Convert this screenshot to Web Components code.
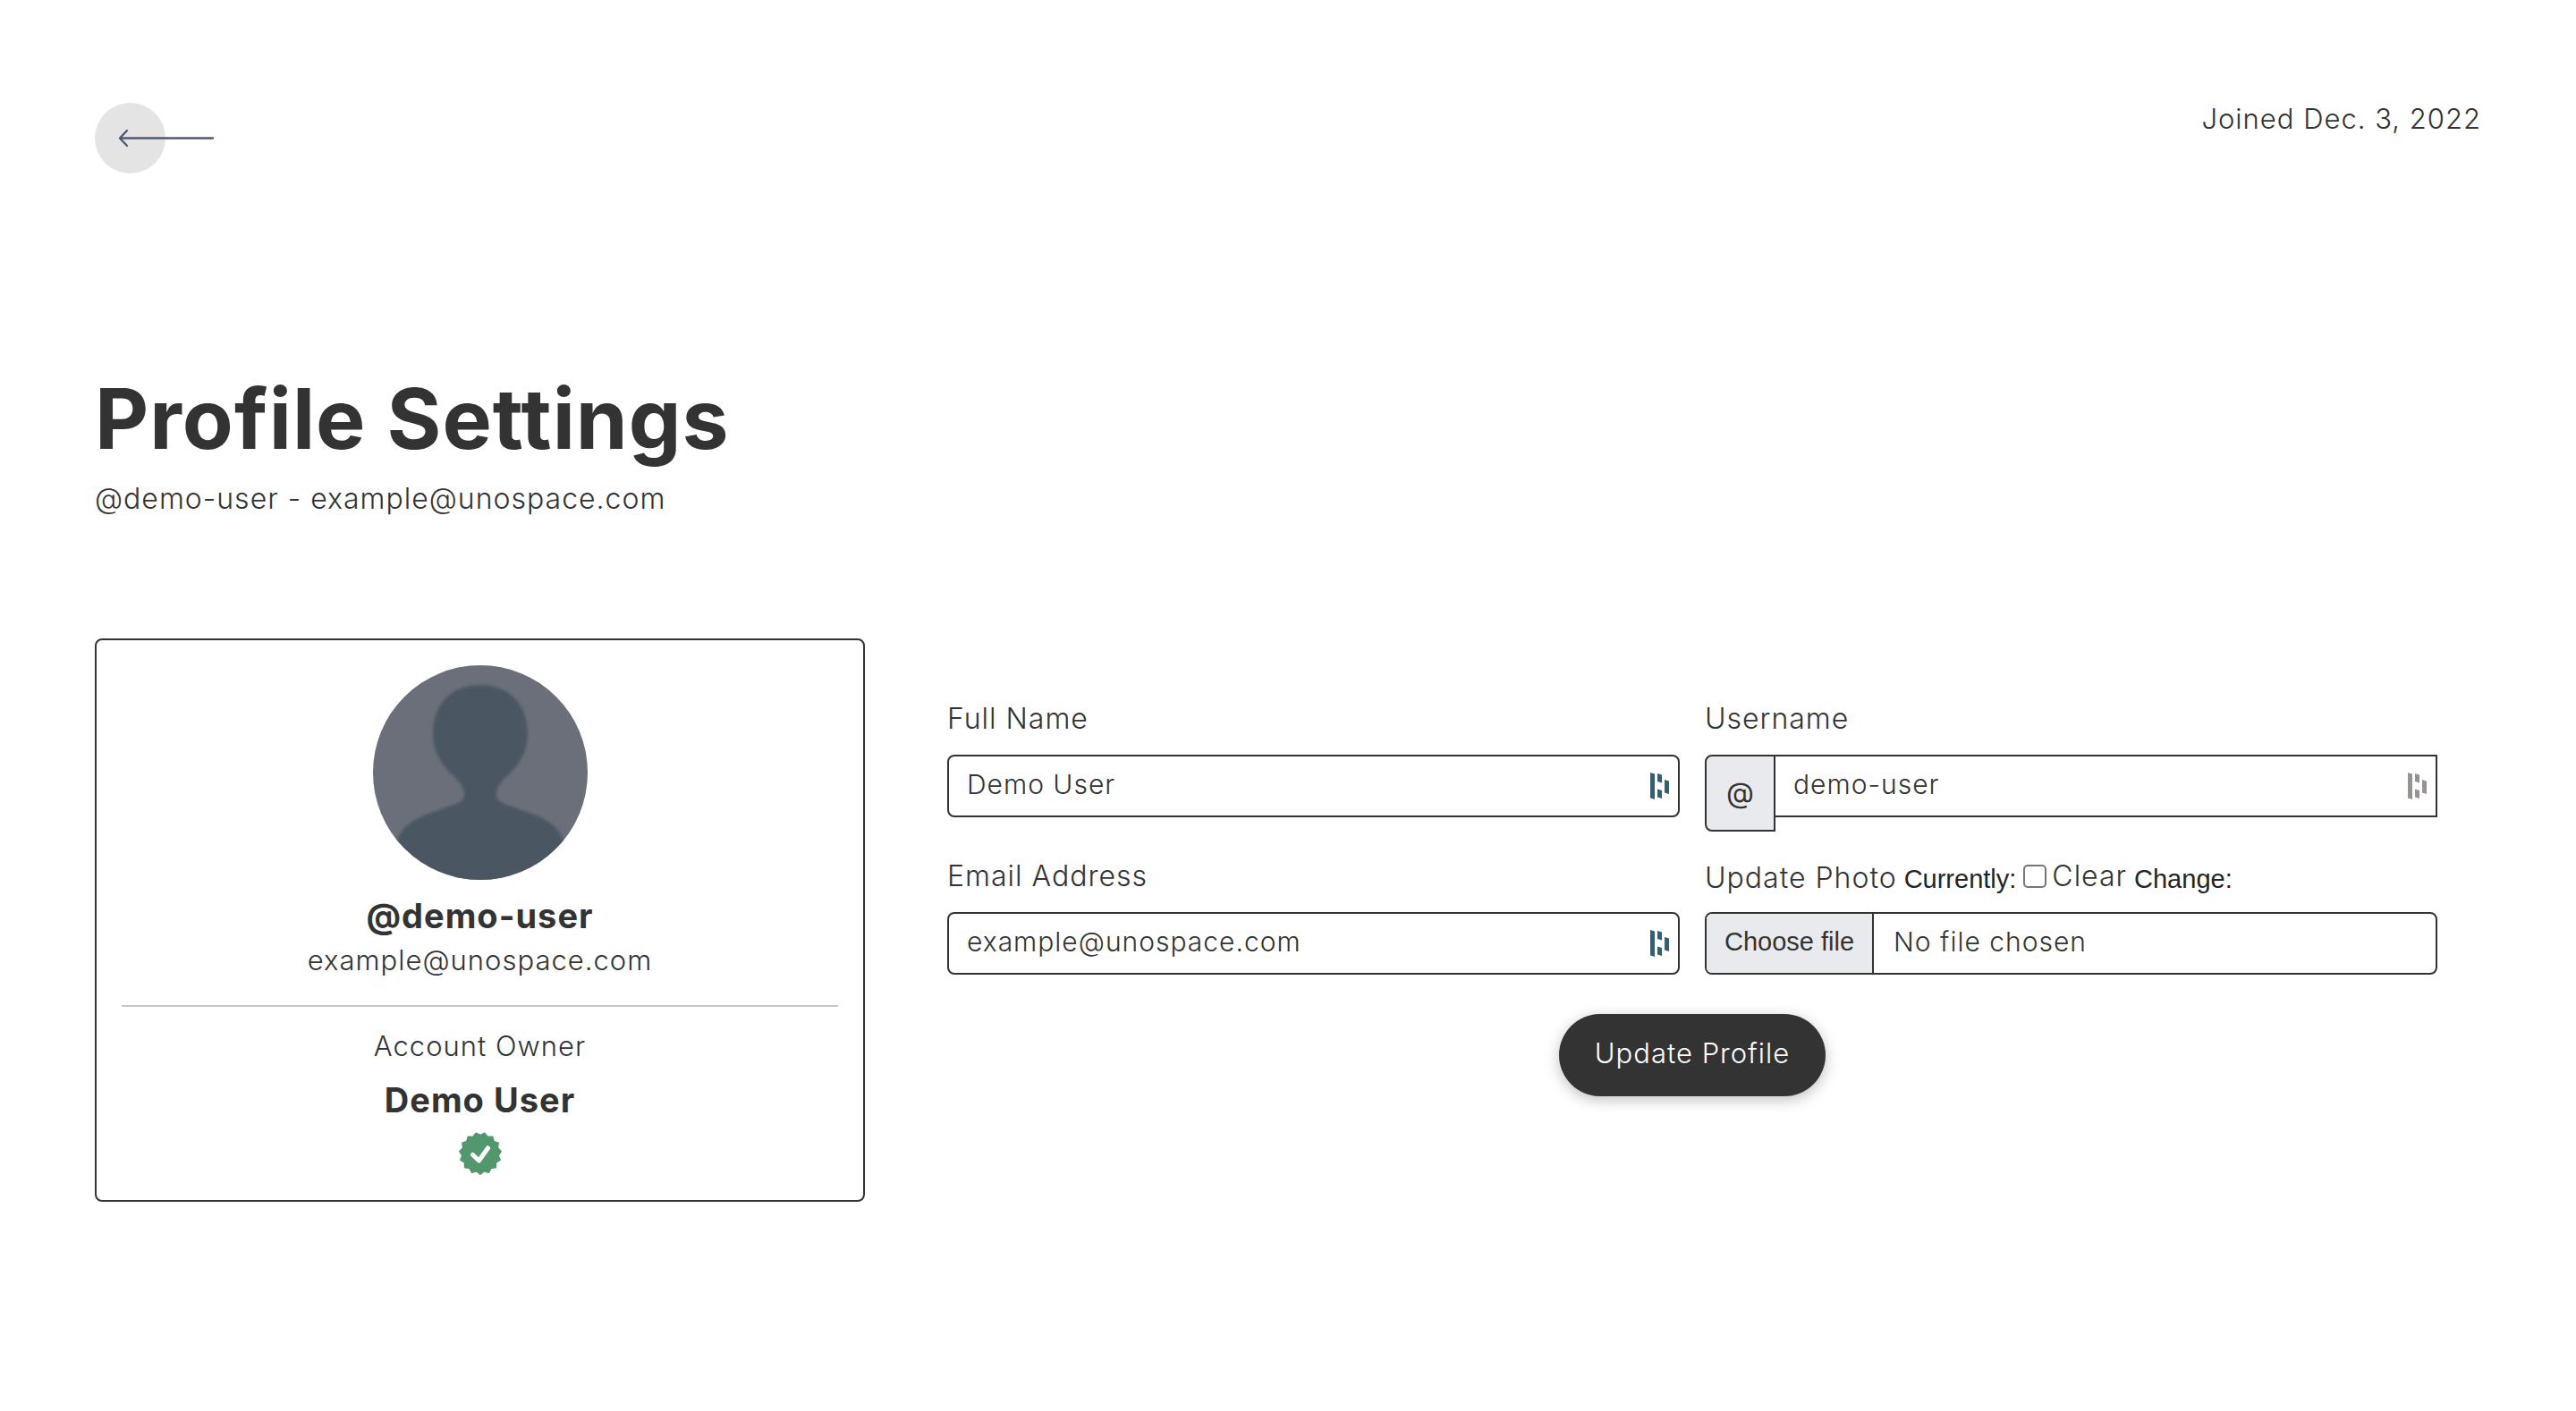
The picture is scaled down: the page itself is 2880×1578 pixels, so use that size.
<!DOCTYPE html>
<html lang="en">
<head>
<meta charset="utf-8">
<title>Profile Settings</title>
<style>
  body { margin: 0; background: #fff; color: #333; font: 300 32px/48px Inter, "Liberation Sans", sans-serif; letter-spacing: 1px; }
</style>
</head>
<body>
<profile-page></profile-page>
<script>
const define = (name, html, setup) => {
  const template = document.createElement('template');
  template.innerHTML = '<style>*{box-sizing:border-box}</style>' + html;
  customElements.define(name, class extends HTMLElement {
    connectedCallback() {
      if (this.shadowRoot) return;
      const root = this.attachShadow({ mode: 'open' });
      root.append(template.content.cloneNode(true));
      if (setup) setup(this, root);
    }
  });
};

define('back-link', `
  <style>
    :host { display: block; }
    a { display: block; width: 134px; height: 80px; }
    svg { display: block; }
  </style>
  <a href="#" aria-label="Back">
    <svg width="134" height="80" viewBox="0 0 134 80" fill="none">
      <circle cx="39.5" cy="39.5" r="39.5" fill="#e4e4e4"/>
      <path d="M132 39.5H28M36 31L28 39.5L36 48" stroke="#4b5b75" stroke-width="2.4" stroke-linecap="round" stroke-linejoin="round"/>
    </svg>
  </a>`);

define('user-avatar', `
  <style>:host { display: block; width: 240px; height: 240px; border-radius: 50%; overflow: hidden; } svg { display: block; }</style>
  <svg width="240" height="240" viewBox="0 0 240 240" role="img" aria-label="Profile photo">
    <defs><filter id="soft"><feGaussianBlur stdDeviation="1.6"/></filter></defs>
    <rect width="240" height="240" fill="#6a6f79"/>
    <path filter="url(#soft)" fill="#4c5763" d="M120 22C88 22 67 43 67 77C67 97 77 111 88 122C96 129 102 136 102 144C102 153 96 154 76 161C49 170 34 177 27 196L10 250H230L213 196C206 177 191 170 164 161C144 154 138 153 138 144C138 136 144 129 152 122C163 111 173 97 173 77C173 43 152 22 120 22Z"/>
  </svg>`);

define('verified-badge', `
  <style>:host { display: block; } svg { display: block; }</style>
  <svg width="48" height="48" viewBox="0 0 48 48" role="img" aria-label="Verified">
    <path class="seal" fill="#52986c" stroke="#52986c" stroke-width="2" stroke-linejoin="round"/>
    <path d="M15.5 25.5L22.5 32L32.5 18" fill="none" stroke="#fff" stroke-width="5" stroke-linecap="round" stroke-linejoin="round"/>
  </svg>`, (host, root) => {
  const teeth = 15, points = [];
  for (let i = 0; i < teeth * 2; i++) {
    const angle = Math.PI / 2 + i * Math.PI / teeth, radius = i % 2 ? 20 : 23;
    points.push((24 + radius * Math.cos(angle)).toFixed(2) + ' ' + (24 + radius * Math.sin(angle)).toFixed(2));
  }
  root.querySelector('.seal').setAttribute('d', 'M' + points.join('L') + 'Z');
});

define('profile-card', `
  <style>
    :host { display: flex; flex-direction: column; align-items: center; padding: 28px; border: 2px solid #333; border-radius: 8px; font-size: 31px; line-height: 52px; text-align: center; }
    h2, p { margin: 0; }
    h2 { font-size: 38px; line-height: 48px; font-weight: 700; }
    .handle { margin-top: 16px; }
    hr { width: 100%; margin: 24px 0 18px; border: 0; border-top: 2px solid #c6c6c6; }
    .owner { margin: 10px 0 12px; }
  </style>
  <user-avatar></user-avatar>
  <h2 class="handle"><slot name="handle"></slot></h2>
  <p><slot name="email"></slot></p>
  <hr>
  <p>Account Owner</p>
  <h2 class="owner"><slot name="owner"></slot></h2>
  <verified-badge></verified-badge>`);

define('autofill-mark', `
  <style>:host { display: block; color: #2b6277; } :host([muted]) { color: #979393; } svg { display: block; }</style>
  <svg width="22" height="30" viewBox="0 0 22 30" fill="currentColor" aria-hidden="true">
    <path d="M0 0L5 1.500V30L0 28.500ZM8 1L13 2.500V11.500L8 10ZM8 18.500L13 20V29L8 27.500ZM16 8L21 9.500V24L16 22.500Z"/>
  </svg>`);

define('text-field', `
  <style>
    :host { display: block; }
    label { display: block; margin-bottom: 16px; }
    .group { display: flex; align-items: flex-start; }
    .prefix { display: none; width: 79px; height: 86px; align-items: center; justify-content: center; background: #e9eaee; border: 2px solid #333; border-radius: 8px 0 0 8px; font-weight: 400; letter-spacing: 0; }
    .box { flex: 1; display: flex; align-items: center; height: 70px; padding-right: 9px; border: 2px solid #333; border-radius: 8px; }
    :host([prefix]) .prefix { display: flex; }
    :host([prefix]) .box { border-left: 0; border-radius: 0; }
    input { flex: 1; min-width: 0; height: 66px; padding: 0 20px 4px; border: 0; outline: 0; background: none; color: inherit; font: inherit; font-size: 30px; letter-spacing: inherit; }
  </style>
  <label for="field"></label>
  <div class="group"><span class="prefix"></span><div class="box"><input id="field"><autofill-mark></autofill-mark></div></div>`,
  (host, root) => {
    root.querySelector('label').textContent = host.getAttribute('label');
    root.querySelector('.prefix').textContent = host.getAttribute('prefix') || '';
    const input = root.querySelector('input');
    input.type = host.getAttribute('type') || 'text';
    input.value = host.getAttribute('value');
    if (host.hasAttribute('prefix')) root.querySelector('autofill-mark').setAttribute('muted', '');
  });

define('photo-field', `
  <style>
    :host { display: block; }
    .caption { display: flex; align-items: baseline; height: 48px; margin-bottom: 16px; white-space: nowrap; }
    .note { margin: 0 8px; font: 400 29px/48px "Liberation Sans", sans-serif; letter-spacing: 0; color: #212529; }
    .clear { display: flex; align-items: center; gap: 6px; }
    input[type=checkbox] { appearance: none; width: 26px; height: 26px; margin: 0; border: 2px solid #767676; border-radius: 5px; background: #fff; }
    .picker { position: relative; display: flex; height: 70px; border: 2px solid #333; border-radius: 8px; overflow: hidden; }
    .choose { padding: 0 20px; background: #e9eaee; border-right: 2px solid #333; font: 400 29px/62px "Liberation Sans", sans-serif; letter-spacing: 0; }
    .name { padding: 0 22px; font-size: 30px; line-height: 62px; }
    input[type=file] { position: absolute; inset: 0; opacity: 0; }
  </style>
  <div class="caption"><label for="photo">Update Photo</label><span class="note">Currently:</span><span class="clear"><input type="checkbox" id="clear"><label for="clear">Clear</label></span><span class="note">Change:</span></div>
  <label class="picker" for="photo"><span class="choose">Choose file</span><span class="name">No file chosen</span><input type="file" id="photo"></label>`);

define('profile-form', `
  <style>
    :host { display: block; }
    form { display: grid; grid-template-columns: 1fr 1fr; gap: 26px 28px; }
    .actions { grid-column: 1 / -1; display: flex; justify-content: center; margin-top: 18px; }
    button { padding: 0 40px 4px; height: 92px; border: 0; border-radius: 46px; background: #333; color: #fff; font: inherit; font-size: 31px; letter-spacing: inherit; box-shadow: 0 4px 16px rgba(0,0,0,.25); }
  </style>
  <form>
    <text-field label="Full Name" value="Demo User"></text-field>
    <text-field label="Username" prefix="@" value="demo-user"></text-field>
    <text-field label="Email Address" type="email" value="example@unospace.com"></text-field>
    <photo-field></photo-field>
    <div class="actions"><button type="button">Update Profile</button></div>
  </form>`);

define('profile-page', `
  <style>
    :host { display: block; padding: 108px 106px; }
    header { display: flex; justify-content: space-between; align-items: flex-start; }
    back-link { margin-top: 7px; }
    h1 { margin: 217px 0 10px; font-size: 93px; line-height: 112px; font-weight: 700; }
    p { margin: 0; }
    main { display: grid; grid-template-columns: 861fr 1666fr; column-gap: 92px; align-items: start; margin-top: 132px; padding-right: 49px; }
    .joined { font-size: 31px; line-height: 50px; }
    profile-form { margin-top: 66px; }
  </style>
  <header><back-link></back-link><span class="joined">Joined Dec. 3, 2022</span></header>
  <h1>Profile Settings</h1>
  <p>@demo-user - example@unospace.com</p>
  <main>
    <profile-card>
      <span slot="handle">@demo-user</span>
      <span slot="email">example@unospace.com</span>
      <span slot="owner">Demo User</span>
    </profile-card>
    <profile-form></profile-form>
  </main>`);
</script>
</body>
</html>
